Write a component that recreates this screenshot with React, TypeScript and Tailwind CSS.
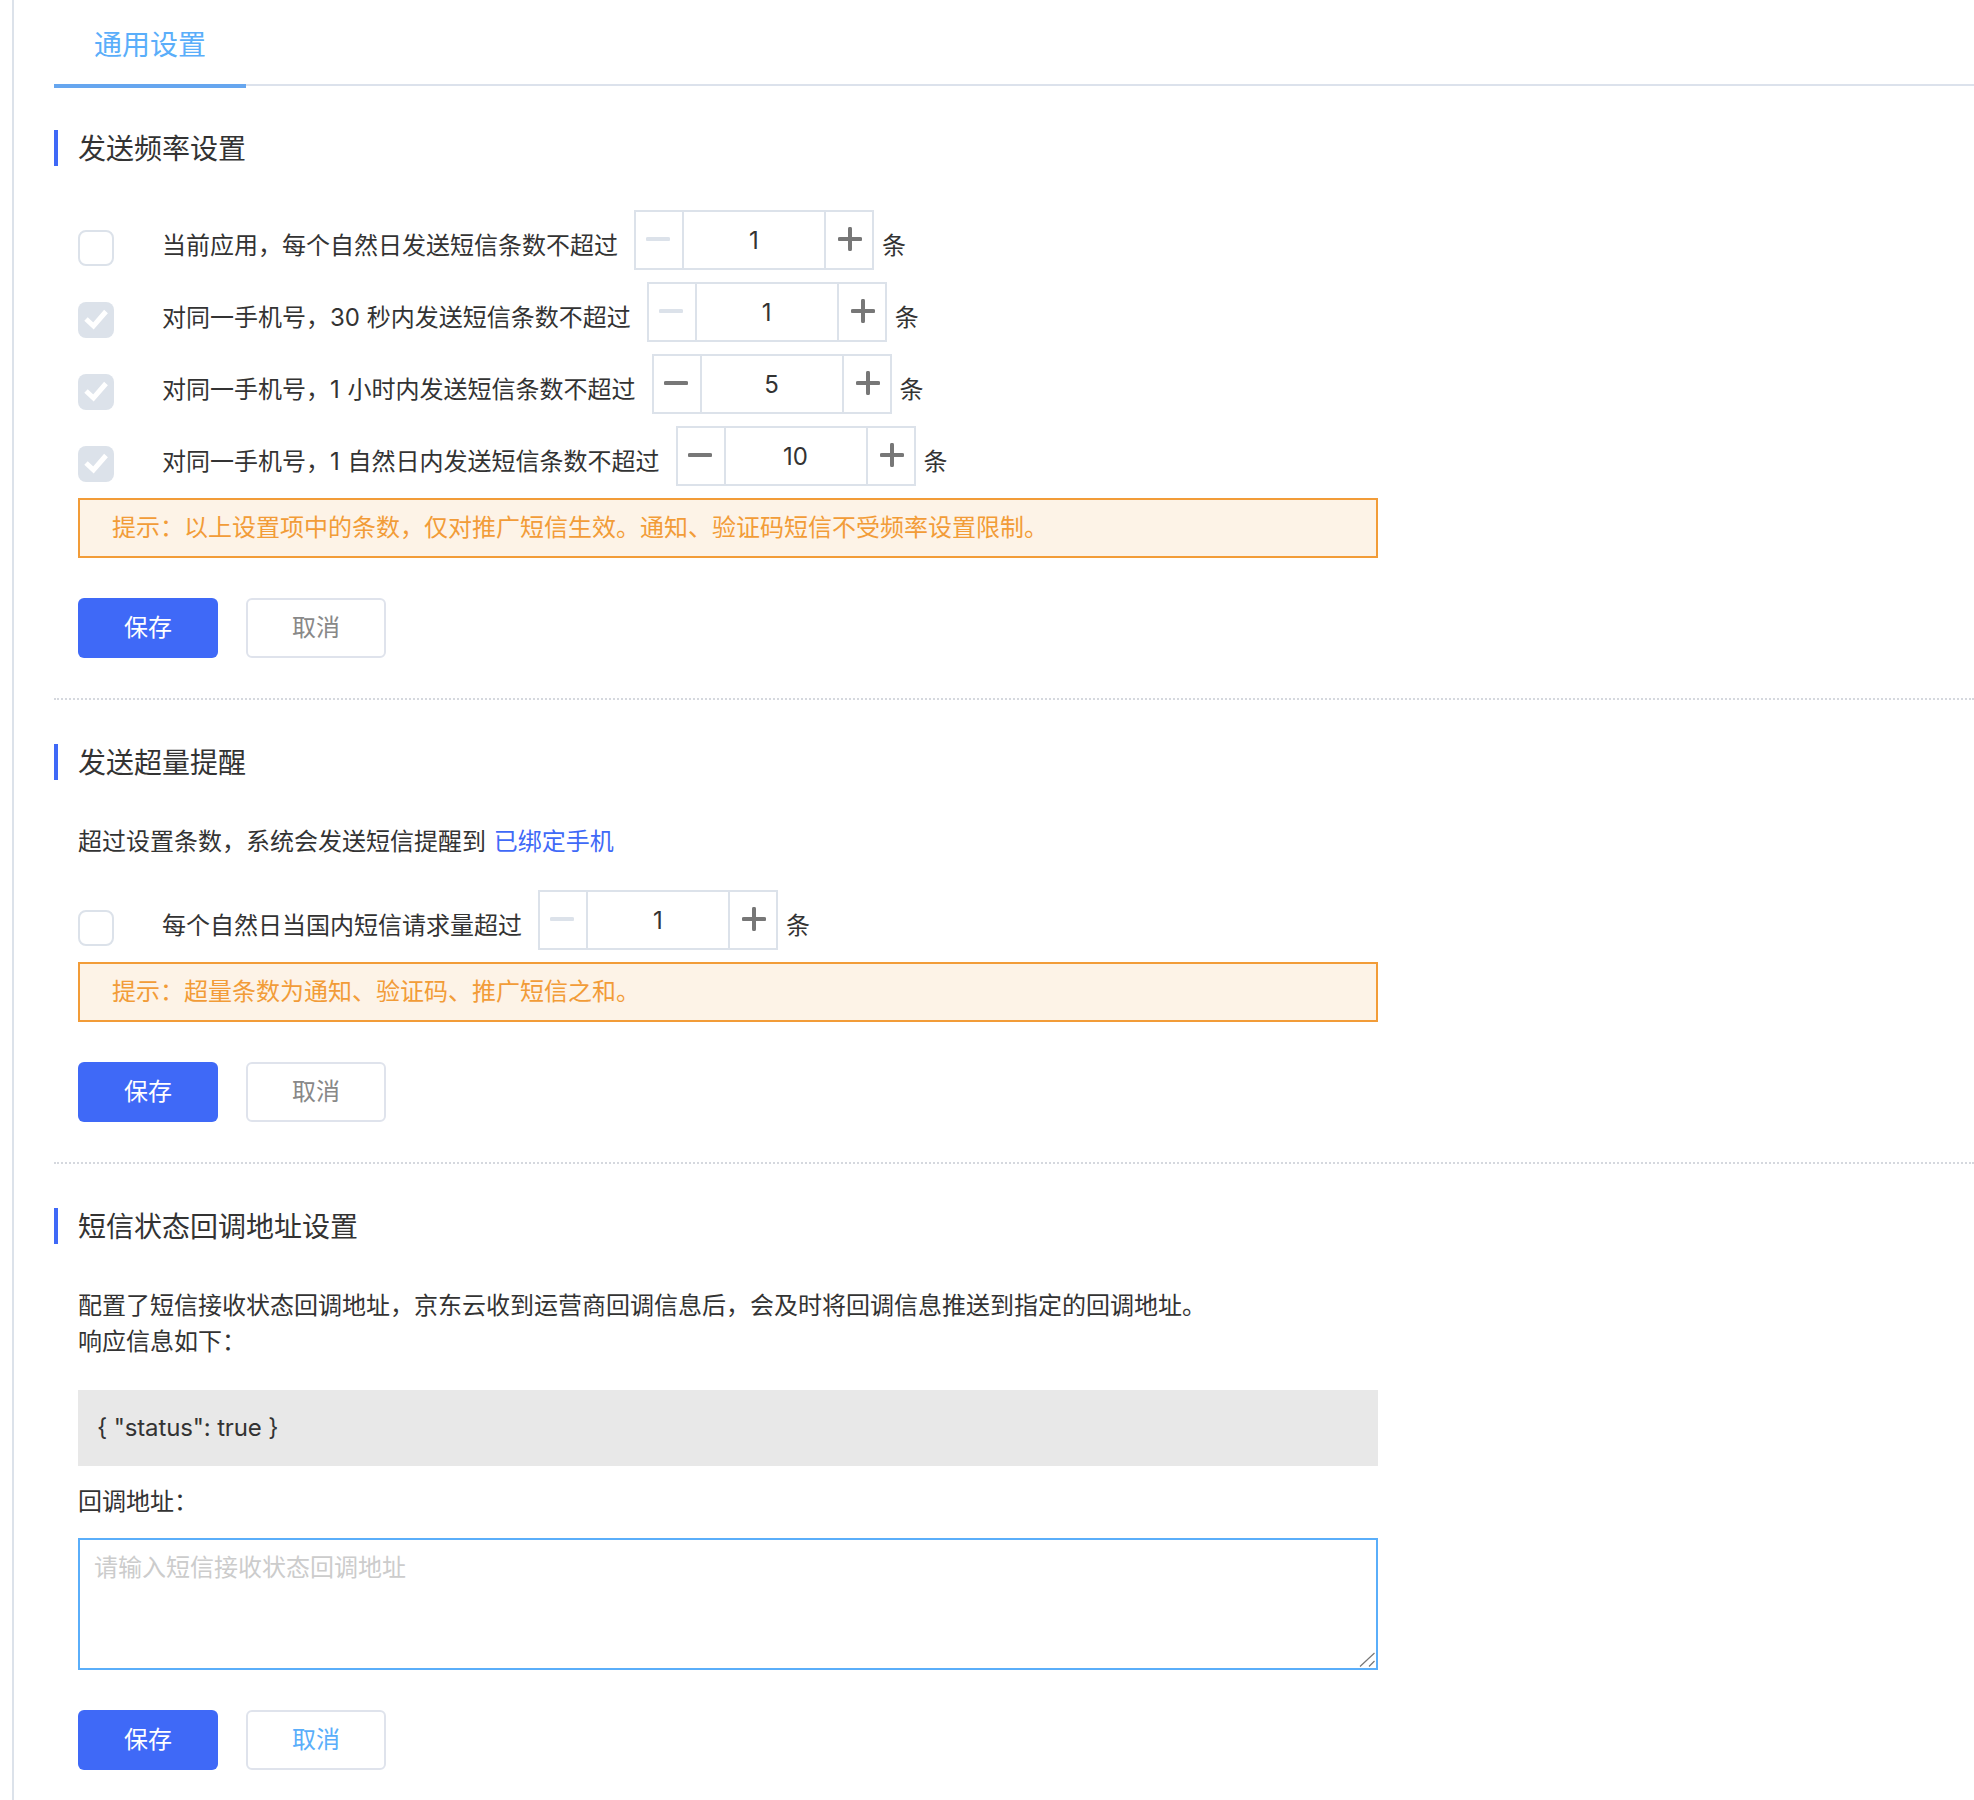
import React from 'react';

const font = { fontFamily: 'Inter, "Noto Sans CJK SC", sans-serif' };

interface RuleRowProps {
  label: string;
  value: number;
  checked?: boolean;
  minusActive?: boolean;
  wideSpace?: boolean;
}

// Disabled minus is pale, the enabled one matches the plus
const Stepper: React.FC<{ value: number; minusActive?: boolean }> = ({ value, minusActive }) => (
  <div className="flex h-[60px] w-[240px] shrink-0 border-2 border-[#dce2ea] bg-white">
    <div className="flex w-[48px] items-center justify-center border-r-2 border-[#dce2ea] pb-[2px] pr-[2px]">
      <svg width="24" height="4" viewBox="0 0 24 4">
        <line x1="1.75" y1="2" x2="22.25" y2="2" stroke={minusActive ? '#777777' : '#dce2ea'} strokeWidth="4" strokeLinecap="round" />
      </svg>
    </div>
    <div className="flex flex-1 items-center justify-center pt-[2px] text-[24px] text-[#333333]">{value}</div>
    <div className="flex w-[48px] items-center justify-center border-l-2 border-[#dce2ea] pb-[2px] pl-[2px]">
      <svg width="24" height="24" viewBox="0 0 24 24">
        <path d="M1.75 12H22.25M12 1.75V22.25" stroke="#777777" strokeWidth="4" strokeLinecap="round" fill="none" />
      </svg>
    </div>
  </div>
);

const RuleRow: React.FC<RuleRowProps> = ({ label, value, checked, minusActive, wideSpace }) => (
  <div className="flex h-[72px] items-start text-[24px] leading-[36px] text-[#333333]">
    {checked ? (
      <div className="mt-5 h-9 w-9 shrink-0 rounded-lg bg-[#dce2ea]">
        <svg width="36" height="36" viewBox="0 0 36 36">
          <path d="M8 17L15.5 24L28 9.5" stroke="#ffffff" strokeWidth="5" fill="none" />
        </svg>
      </div>
    ) : (
      <div className="mt-5 h-9 w-9 shrink-0 rounded-lg border-2 border-[#dce2ea] bg-white" />
    )}
    <span className={`mt-[18px] ml-[48px] mr-4 whitespace-nowrap ${wideSpace ? '[word-spacing:1px]' : ''}`}>{label}</span>
    <Stepper value={value} minusActive={minusActive} />
    <span className="mt-[18px] ml-2">条</span>
  </div>
);

const Hint: React.FC<{ text: string }> = ({ text }) => (
  <div className="flex h-[60px] w-[1300px] items-center border-2 border-[#f29c38] bg-[#fdf3e7] pl-[32px] text-[24px] text-[#f29c38]">
    {text}
  </div>
);

const Actions: React.FC<{ cancelBlue?: boolean }> = ({ cancelBlue }) => (
  <div className="mt-10 flex gap-7">
    <button className="h-[60px] w-[140px] rounded-md bg-[#3f69f7] text-[24px] text-white">保存</button>
    <button
      className={`h-[60px] w-[140px] rounded-md border-2 border-[#dfe3ec] bg-white text-[24px] ${
        cancelBlue ? 'text-[#5aaefa]' : 'text-[#888888]'
      }`}
    >
      取消
    </button>
  </div>
);

const SectionTitle: React.FC<{ title: string }> = ({ title }) => (
  <h3 className="-ml-6 h-9 border-l-4 border-[#3f69f7] pl-5 text-[28px] leading-[38px] font-normal text-[#333333]">
    {title}
  </h3>
);

const Divider = () => <div className="-ml-6 mt-10 border-t-2 border-dotted border-[#d5d8de]" />;

export default function App() {
  return (
    <div className="h-[1800px] w-[1974px] bg-white pl-3" style={font}>
      <div className="h-full border-l-2 border-[#dce2ea] pl-10">
        {/* Tabs */}
        <div className="h-[86px] border-b-2 border-[#dce2ec]">
          <div className="h-[88px] w-[192px] border-b-4 border-[#66a6ef] pl-10 pt-[25px] text-[28px] leading-[40px] text-[#5aaefa]">
            通用设置
          </div>
        </div>

        <div className="pl-6">
          <section className="mt-[44px]">
            <SectionTitle title="发送频率设置" />
            <div className="mt-[44px]">
              <RuleRow label="当前应用，每个自然日发送短信条数不超过" value={1} />
              <RuleRow label="对同一手机号，30 秒内发送短信条数不超过" value={1} checked />
              <RuleRow label="对同一手机号，1 小时内发送短信条数不超过" value={5} checked minusActive wideSpace />
              <RuleRow label="对同一手机号，1 自然日内发送短信条数不超过" value={10} checked minusActive wideSpace />
            </div>
            <Hint text="提示：以上设置项中的条数，仅对推广短信生效。通知、验证码短信不受频率设置限制。" />
            <Actions />
          </section>
          <Divider />

          <section className="mt-[44px]">
            <SectionTitle title="发送超量提醒" />
            <p className="mt-[44px] text-[24px] leading-[36px] text-[#333333]">
              超过设置条数，系统会发送短信提醒到 <a className="ml-px text-[#3f69f7]">已绑定手机</a>
            </p>
            <div className="mt-[30px]">
              <RuleRow label="每个自然日当国内短信请求量超过" value={1} />
            </div>
            <Hint text="提示：超量条数为通知、验证码、推广短信之和。" />
            <Actions />
          </section>
          <Divider />

          <section className="mt-[44px]">
            <SectionTitle title="短信状态回调地址设置" />
            <p className="mt-[44px] text-[24px] leading-[36px] text-[#333333]">
              配置了短信接收状态回调地址，京东云收到运营商回调信息后，会及时将回调信息推送到指定的回调地址。
              <br />
              响应信息如下：
            </p>
            <div className="mt-[30px] flex h-[76px] w-[1300px] items-center bg-[#e8e8e8] pl-[19px] text-[24px] tracking-[-0.14px] text-[#333333]">
              {'{ "status": true }'}
            </div>
            <div className="mt-[18px] text-[24px] leading-[36px] text-[#333333]">回调地址：</div>
            <div className="relative mt-[18px] h-[132px] w-[1300px]">
              <textarea
                readOnly
                placeholder="请输入短信接收状态回调地址"
                className="block h-full w-full resize-none border-2 border-[#5aaefa] px-[14px] py-[10px] text-[24px] leading-[36px] outline-none placeholder:text-[#cccccc]"
              />
              {/* Resize grip */}
              <svg className="absolute bottom-[3px] right-[2px]" width="17" height="15" viewBox="0 0 17 15">
                <path d="M1 14.5L15.5 1M10 14.5L15.5 9" stroke="#777777" strokeWidth="1.2" fill="none" />
              </svg>
            </div>
            <Actions cancelBlue />
          </section>
        </div>
      </div>
    </div>
  );
}
